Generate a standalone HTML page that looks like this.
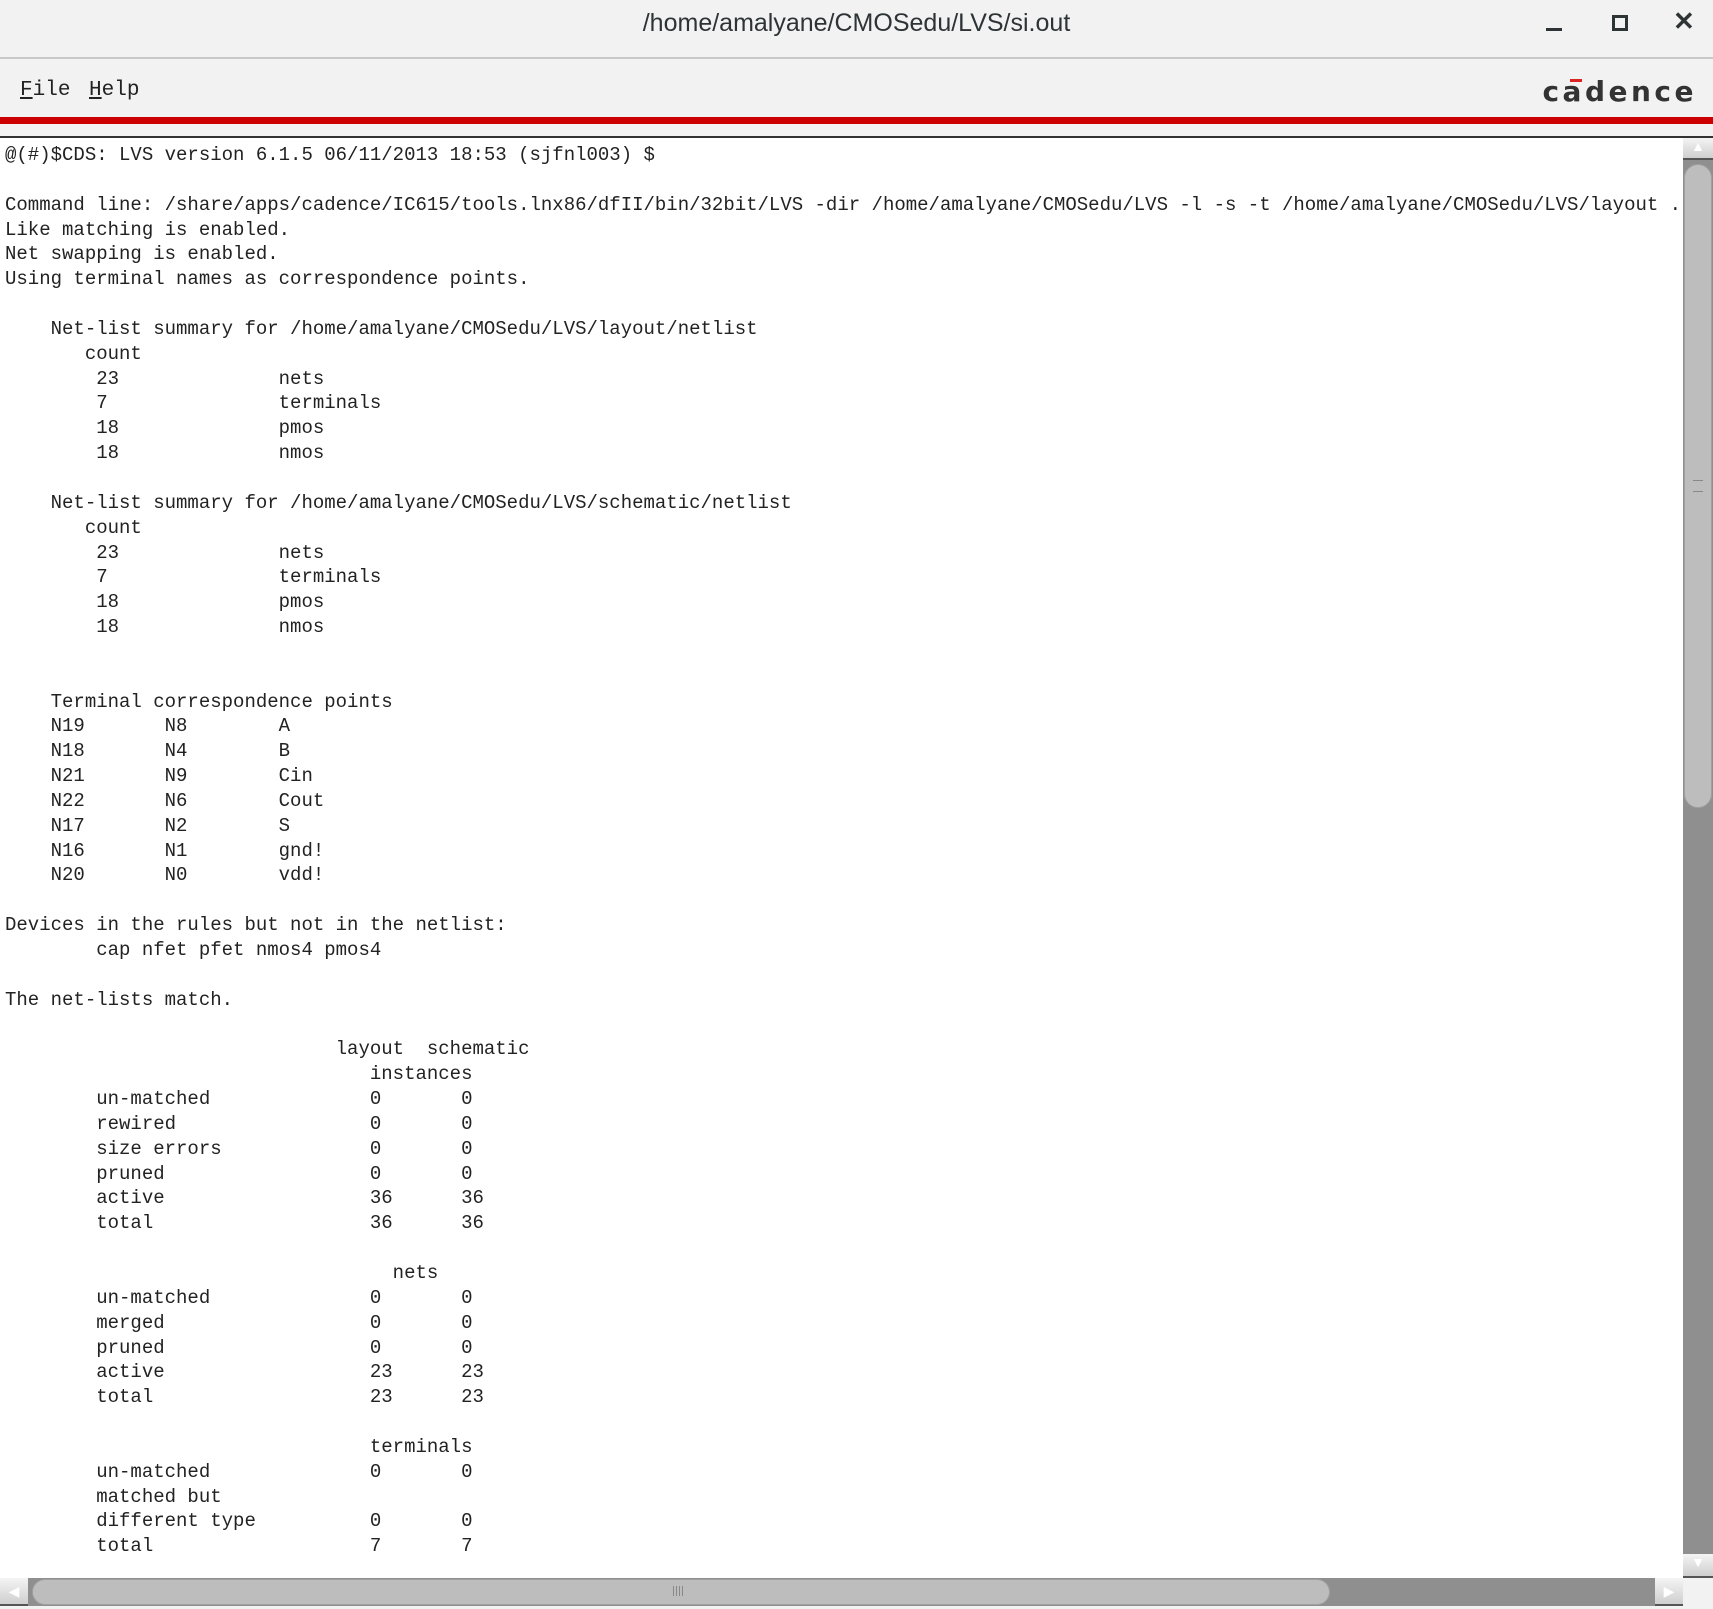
<!DOCTYPE html>
<html><head><meta charset="utf-8"><style>
html,body{margin:0;padding:0;width:1713px;height:1609px;overflow:hidden;background:#f2f2f2;font-family:"Liberation Sans",sans-serif}
.title{position:absolute;left:0;top:0;width:1713px;height:57px;background:#f2f2f2;border-bottom:2px solid #c8c8c8}
.title .t{position:absolute;left:0;right:0;top:9px;text-align:center;font-size:25px;color:#2e3436}
.menu{position:absolute;left:0;top:59px;width:1713px;height:58px;background:#f2f2f2}
.menu span{position:absolute;top:20px;font-family:"Liberation Mono",monospace;font-size:21px;color:#222}
.logo{position:absolute;right:16px;top:16px;font-size:28px;letter-spacing:3.5px;color:#333;font-family:"DejaVu Sans",sans-serif;white-space:nowrap;font-weight:bold}
.red{position:absolute;left:0;top:117px;width:1713px;height:7px;background:#cc0000}
.dk{position:absolute;left:0;top:136px;width:1713px;height:2px;background:#333}
.text{position:absolute;left:0;top:138px;width:1683px;height:1440px;background:#fff;overflow:hidden}
pre{margin:0;position:absolute;left:5px;top:5px;font-family:"Liberation Mono",monospace;font-size:19px;line-height:24.85px;color:#222;white-space:pre}
.vs{position:absolute;left:1683px;top:138px;width:30px;height:1440px;background:#8f8f8f}
.hs{position:absolute;left:0;top:1578px;width:1683px;height:28px;background:#8f8f8f}
.btn{position:absolute;background:linear-gradient(#f4f4f4,#cfcfcf);border-bottom:2px solid #555}
.thumb{position:absolute;background:#bdbdbd;border:1px solid #a0a0a0;border-radius:14px}
</style></head><body>
<div class="title"><div class="t">/home/amalyane/CMOSedu/LVS/si.out</div>
<div style="position:absolute;left:1546px;top:28px;width:16px;height:3px;background:#2e3436"></div>
<div style="position:absolute;left:1612px;top:15px;width:10px;height:10px;border:3px solid #2e3436"></div>
<div style="position:absolute;left:1673px;top:6px;font-size:26px;font-weight:bold;color:#2e3436">✕</div>
</div>
<div class="menu"><span style="left:20px"><u>F</u>ile</span><span style="left:89px"><u>H</u>elp</span>
<div class="logo">cadence</div>
<div style="position:absolute;left:1570px;top:20px;width:12px;height:3px;background:#d22"></div></div>
<div class="red"></div>
<div class="dk"></div>
<div class="text"><pre>@(#)$CDS: LVS version 6.1.5 06/11/2013 18:53 (sjfnl003) $

Command line: /share/apps/cadence/IC615/tools.lnx86/dfII/bin/32bit/LVS -dir /home/amalyane/CMOSedu/LVS -l -s -t /home/amalyane/CMOSedu/LVS/layout .
Like matching is enabled.
Net swapping is enabled.
Using terminal names as correspondence points.

    Net-list summary for /home/amalyane/CMOSedu/LVS/layout/netlist
       count
        23              nets
        7               terminals
        18              pmos
        18              nmos

    Net-list summary for /home/amalyane/CMOSedu/LVS/schematic/netlist
       count
        23              nets
        7               terminals
        18              pmos
        18              nmos


    Terminal correspondence points
    N19       N8        A
    N18       N4        B
    N21       N9        Cin
    N22       N6        Cout
    N17       N2        S
    N16       N1        gnd!
    N20       N0        vdd!

Devices in the rules but not in the netlist:
        cap nfet pfet nmos4 pmos4

The net-lists match.

                             layout  schematic
                                instances
        un-matched              0       0
        rewired                 0       0
        size errors             0       0
        pruned                  0       0
        active                  36      36
        total                   36      36

                                  nets
        un-matched              0       0
        merged                  0       0
        pruned                  0       0
        active                  23      23
        total                   23      23

                                terminals
        un-matched              0       0
        matched but
        different type          0       0
        total                   7       7
</pre></div>
<div class="vs">
<div class="btn" style="left:0;top:0;width:30px;height:20px;color:#fff;font-size:14px;text-align:center">▲</div>
<div class="thumb" style="left:1px;top:26px;width:26px;height:642px"></div>
<div style="position:absolute;left:10px;top:342px;width:10px;height:10px;border-top:1px solid #888;border-bottom:1px solid #888"></div>
<div class="btn" style="left:0;top:1416px;width:30px;height:22px;color:#fff;font-size:14px;text-align:center">▼</div>
</div>
<div class="hs">
<div class="btn" style="left:0;top:0;width:28px;height:26px;color:#fff;font-size:14px;text-align:center;line-height:26px">◀</div>
<div class="thumb" style="left:32px;top:1px;width:1296px;height:24px"></div>
<div style="position:absolute;left:673px;top:8px;width:12px;height:10px;background:repeating-linear-gradient(90deg,#888 0 1px,transparent 1px 3px)"></div>
<div class="btn" style="left:1655px;top:0;width:28px;height:26px;color:#fff;font-size:14px;text-align:center;line-height:26px">▶</div>
</div>
</body></html>
